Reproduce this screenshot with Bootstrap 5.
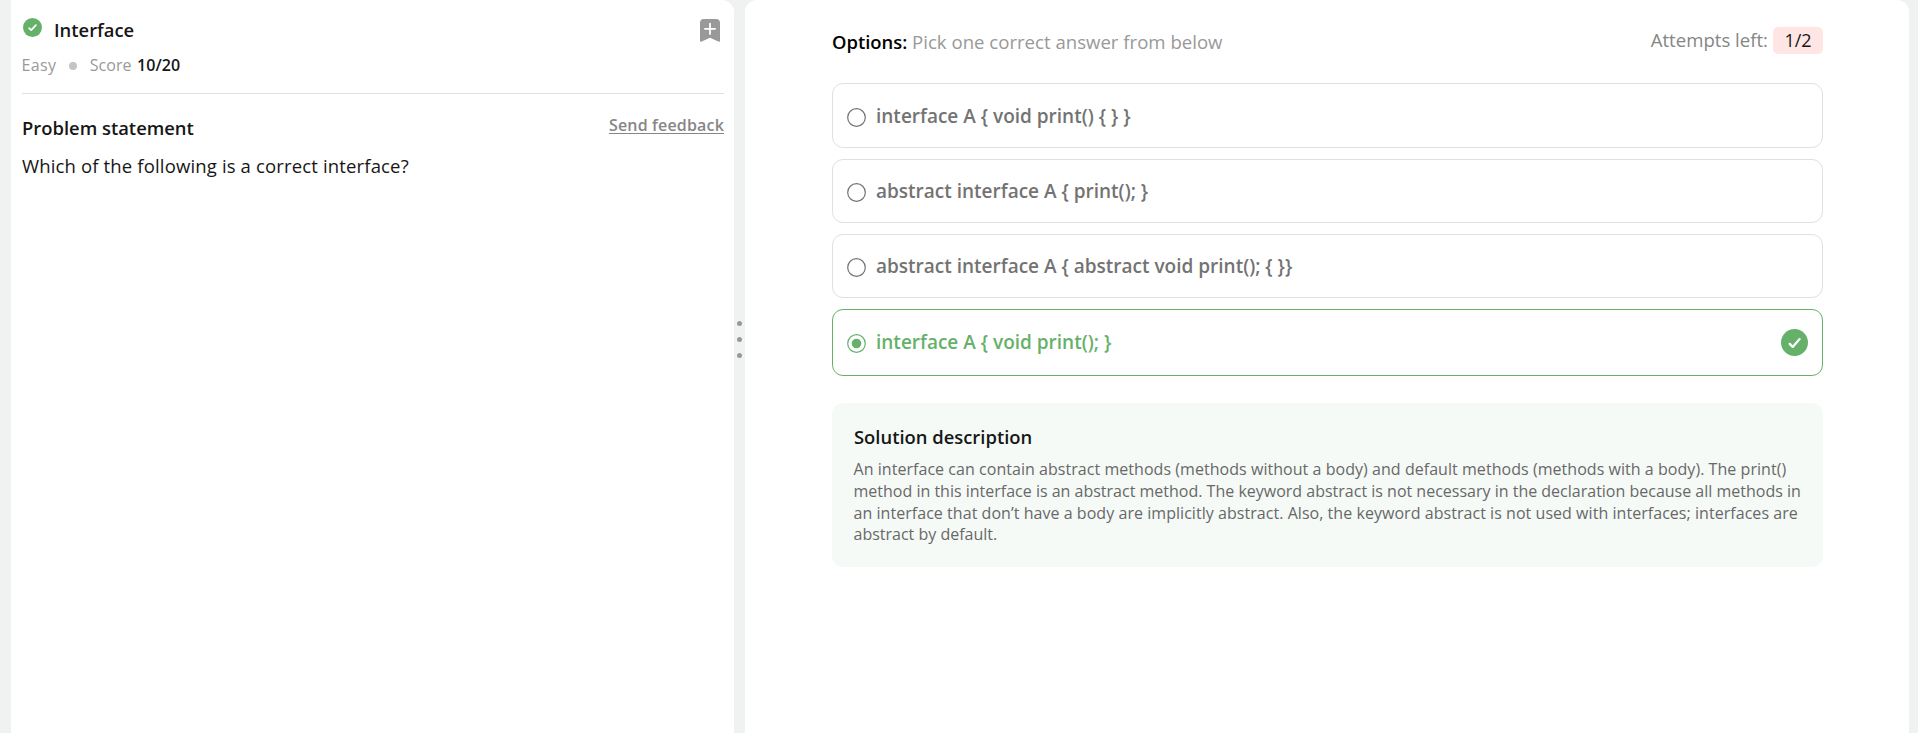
<!DOCTYPE html>
<html lang="en">
<head>
<meta charset="utf-8">
<meta name="viewport" content="width=device-width, initial-scale=1">
<title>Interface</title>
<link href="https://cdn.jsdelivr.net/npm/bootstrap@5.3.0/dist/css/bootstrap.min.css" rel="stylesheet">
<style>
  body { background: #f0f2f2; color: #161616; font-family: "Open Sans", "Noto Sans", sans-serif; font-size: 18.6px; line-height: 26px; overflow: hidden; }
  .workspace { height: 733px; padding: 0 9px 0 11px; }
  .problem-pane { width: 723px; padding: 17px 10px 0 11px; border-top-right-radius: 12px; }
  .drag-handle { width: 11px; gap: 11px; padding-top: 321px; }
  .drag-handle i { width: 5px; height: 5px; background: #999; }
  .answer-pane { padding: 27px 86px 0 87px; border-radius: 12px 12px 0 0; min-width: 0; }
  .heading { font-size: 18.4px; font-weight: 600; line-height: 26px; }
  .muted { color: #999; }
  .title-check { margin: 1px 12px 0 1px; }
  .bookmark { margin: 2px 4px 0 0; }
  .meta { font-size: 16px; line-height: 24px; margin-top: 10px; padding-bottom: 16px; border-bottom: 1px solid #e0e0e0; }
  .meta .easy { letter-spacing: .35px; margin-left: -.5px; }
  .meta .dot { width: 8px; height: 8px; background: #c4c4c4; margin: 1px 12.5px 0 13px; }
  .meta .score { margin-left: 5.5px; letter-spacing: .1px; }
  .statement-row { margin-top: 21px; }
  .feedback { color: #868686; font-size: 16px; font-weight: 600; line-height: 20px; letter-spacing: .17px; text-underline-offset: 2px; }
  .question { margin-top: 12px; font-size: 18.5px; letter-spacing: .15px; }
  .options-head { height: 28px; margin-bottom: 28px; }
  .options-head .prompt { padding-top: 2px; }
  .attempts { color: #868686; line-height: 25px; gap: 5px; }
  .attempts-badge { width: 50px; height: 27px; background: #ffe6e5; color: #161616; border-radius: 5px; font-size: 18px; line-height: 26px; }
  .option { height: 64px; border: 1px solid #e0e0e0; border-radius: 11px; padding: 0 14px 0 14px; color: #737373; font-size: 19px; font-weight: 600; }
  .option.first { height: 65px; }
  .option.correct { height: 67px; border-color: #66b16a; color: #66b16a; }
  .option .radio { margin: 3px 10px 0 0; }
  .option.correct .radio { margin-top: 2px; }
  .option .label-text { margin-top: -1px; white-space: pre; }
  .option.first .label-text { margin-top: 0; }
  .option-list { gap: 11px; }
  .solution { height: 164px; margin-top: 27px; padding: 21px 20px 0 22px; background: #f5faf7; border-radius: 11px; }
  .solution p { margin: 9px 0 0 -.5px; color: #686868; font-size: 16px; line-height: 21.8px; white-space: nowrap; }
  .solution .loose { letter-spacing: .045px; }
</style>
</head>
<body>
<main class="workspace d-flex">
  <section class="problem-pane bg-white flex-shrink-0">
    <div class="d-flex align-items-start">
      <svg class="title-check" width="19" height="19" viewBox="0 0 27 27"><circle cx="13.5" cy="13.5" r="13.5" fill="#66b16a"/><path d="M8.7 14.3l3 3 6.6-7.1" fill="none" stroke="#fff" stroke-width="2.4" stroke-linecap="round" stroke-linejoin="round"/></svg>
      <h1 class="heading mb-0 flex-grow-1">Interface</h1>
      <svg class="bookmark" width="20" height="23" viewBox="0 0 20 23"><path d="M4 0h12q4 0 4 4v17.5q0 1.8-1.7 1L10 18.8l-8.3 3.7q-1.7.8-1.7-1V4q0-4 4-4z" fill="#999"/><path d="M10 4.7v10.2M4.9 9.8h10.2" stroke="#fff" stroke-width="1.8" stroke-linecap="round"/></svg>
    </div>
    <div class="meta d-flex align-items-center">
      <span class="easy muted">Easy</span><i class="dot rounded-circle"></i><span class="muted">Score</span><span class="score fw-semibold">10/20</span>
    </div>
    <div class="statement-row d-flex justify-content-between align-items-start">
      <h2 class="heading mb-0">Problem statement</h2>
      <a class="feedback" href="#">Send feedback</a>
    </div>
    <p class="question mb-0">Which of the following is a correct interface?</p>
  </section>
  <div class="drag-handle d-flex flex-column align-items-center flex-shrink-0">
    <i class="rounded-circle"></i><i class="rounded-circle"></i><i class="rounded-circle"></i>
  </div>
  <section class="answer-pane bg-white flex-grow-1">
    <div class="options-head d-flex justify-content-between align-items-start">
      <div class="prompt"><span class="heading text-black">Options:</span> <span class="muted">Pick one correct answer from below</span></div>
      <div class="attempts d-flex">Attempts left:<span class="attempts-badge text-center">1/2</span></div>
    </div>
    <div class="option-list d-flex flex-column">
      <div class="option first d-flex align-items-center">
        <svg class="radio" width="19" height="19"><circle cx="9.5" cy="9.5" r="8.8" fill="none" stroke="currentColor" stroke-width="1.2"/></svg><span class="label-text">interface A { void print() { } }</span>
      </div>
      <div class="option d-flex align-items-center">
        <svg class="radio" width="19" height="19"><circle cx="9.5" cy="9.5" r="8.8" fill="none" stroke="currentColor" stroke-width="1.2"/></svg><span class="label-text">abstract interface A { print(); }</span>
      </div>
      <div class="option d-flex align-items-center">
        <svg class="radio" width="19" height="19"><circle cx="9.5" cy="9.5" r="8.8" fill="none" stroke="currentColor" stroke-width="1.2"/></svg><span class="label-text">abstract interface A { abstract void print(); { }}</span>
      </div>
      <div class="option correct d-flex align-items-center">
        <svg class="radio" width="19" height="19"><circle cx="9.5" cy="9.5" r="8.8" fill="none" stroke="currentColor" stroke-width="1.2"/><circle cx="9.5" cy="9.5" r="4.8" fill="currentColor"/></svg><span class="label-text flex-grow-1">interface A { void print(); }</span>
        <svg width="27" height="27" viewBox="0 0 27 27"><circle cx="13.5" cy="13.5" r="13.5" fill="#66b16a"/><path d="M8.7 14.9l3 3 6.9-7.8" fill="none" stroke="#fff" stroke-width="2.3" stroke-linecap="round" stroke-linejoin="round"/></svg>
      </div>
    </div>
    <div class="solution">
      <div class="heading">Solution description</div>
      <p class="mb-0"><span class="loose">An interface can contain abstract methods (methods without a body) and default methods (methods with a body). The print()</span><br>method in this interface is an abstract method. The keyword abstract is not necessary in the declaration because all methods in<br><span class="loose">an interface that don’t have a body are implicitly abstract. Also, the keyword abstract is not used with interfaces; interfaces are</span><br>abstract by default.</p>
    </div>
  </section>
</main>
<script src="https://cdn.jsdelivr.net/npm/bootstrap@5.3.0/dist/js/bootstrap.bundle.min.js"></script>
</body>
</html>
